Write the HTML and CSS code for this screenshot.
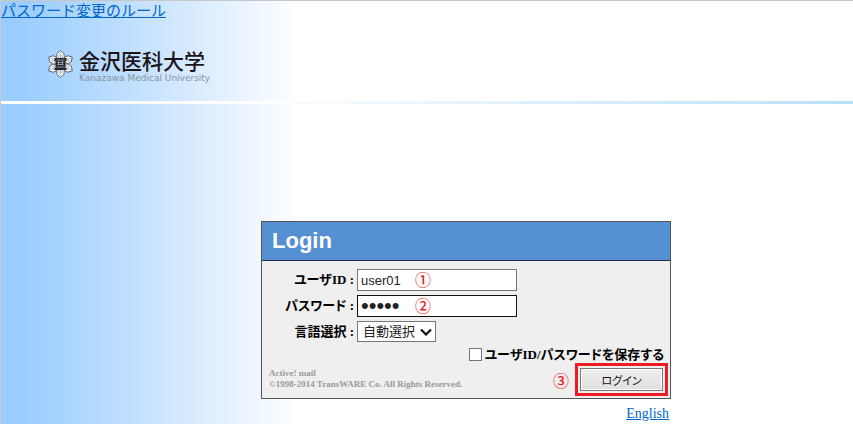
FILE: index.html
```html
<!DOCTYPE html>
<html lang="ja">
<head>
<meta charset="utf-8">
<meta name="viewport" content="width=device-width, initial-scale=1">
<title>Login</title>
<link rel="stylesheet" href="styles.css">
</head>
<body>
<header class="masthead">
  <a class="rules" href="#">パスワード変更のルール</a>
  <div class="brand">
    <svg class="emblem" viewBox="-13 -14 26 28" aria-hidden="true">
      <defs>
        <g id="petal">
          <path d="M0 0-3.800-6.500-3.500-10.500 0-13.600 3.500-10.500 3.800-6.500Z" fill="#fafcfd" stroke="#4a5058" stroke-width=".8" stroke-linejoin="round"/>
          <path d="M0-12V-5M-1.600-9.500V-5M1.600-9.500V-5" stroke="#8a9199" stroke-width=".6"/>
        </g>
      </defs>
      <use href="#petal"/>
      <use href="#petal" transform="rotate(60)"/>
      <use href="#petal" transform="rotate(120)"/>
      <use href="#petal" transform="rotate(180)"/>
      <use href="#petal" transform="rotate(240)"/>
      <use href="#petal" transform="rotate(300)"/>
      <path d="M-6-6H6v3H5v7h1v2H-6V4h1v-7h-1Z" fill="#25282d"/>
      <path d="M-4-4H4M-3-1.500H3M-3 .5H3M-4 3H4M-2-3v4M2-3v4" stroke="#bac2cb" stroke-width=".7"/>
    </svg>
    <div class="names">
      <div class="name-ja">金沢医科大学</div>
      <div class="name-en">Kanazawa Medical University</div>
    </div>
  </div>
</header>
<div class="rule"></div>
<main class="content">
  <form class="panel">
    <h1 class="title">Login</h1>
    <div class="fields">
      <label class="label" for="user">ユーザID :</label>
      <div class="control"><input class="box" id="user" type="text" value="user01"><span class="mark step">①</span></div>
      <label class="label" for="pass">パスワード :</label>
      <div class="control"><input class="box focused" id="pass" type="password" value="12345"><span class="mark step">②</span></div>
      <label class="label" for="lang">言語選択 :</label>
      <div class="control">
        <select class="box select" id="lang"><option>自動選択</option></select>
        <svg class="chevron" viewBox="0 0 12 8" aria-hidden="true"><path d="M1 1.500 6 6.500 11 1.500" fill="none" stroke="#111" stroke-width="2.200"/></svg>
      </div>
    </div>
    <div class="save"><input class="tick" id="save" type="checkbox"><label for="save">ユーザID/パスワードを保存する</label></div>
    <div class="bottom">
      <p class="copyright">Active! mail<br>©1998-2014 TransWARE Co. All Rights Reserved.</p>
      <div class="submit"><span class="mark">③</span><div class="highlight"><button class="login" type="button">ログイン</button></div></div>
    </div>
  </form>
  <a class="english" href="#">English</a>
</main>
</body>
</html>
```
FILE: styles.css
```css
* { box-sizing: border-box; }

html { min-height: 100%; display: flex; flex-direction: column; }

body {
  flex: 1;
  margin: 0;
  border: solid #c8c8c8;
  border-width: 1px 0 0 1px;
  background: linear-gradient(to right, #99ccff 0, #99ccff 16px, #c0dfff 128px, #e2f0ff 220px, #fff 300px);
  color: #000;
  font-family: "Liberation Serif", "Noto Sans CJK JP", serif;
  font-size: 13px;
  font-feature-settings: "palt";
}

a { color: #0066cc; }

.masthead { height: 100px; }

.rules {
  display: block;
  width: max-content;
  font: 15px/17px "Noto Sans CJK JP", sans-serif;
}

.brand { display: flex; gap: 5px; padding: 32px 0 0 46px; }

.emblem { width: 27px; height: 28px; }

.name-ja {
  font: 500 21px/24px "Noto Sans CJK JP", sans-serif;
  font-feature-settings: normal;
  color: #1c1416;
}

.name-en { font: 9px/12px "DejaVu Sans", sans-serif; color: #8592a0; }

.names { margin-top: -2px; }

.rule { height: 3px; background: linear-gradient(to right, #fff 250px, #b9e0fa); }

.content { width: 410px; margin: 117px 0 0 260px; }

.panel { border: 1px solid #555; background: #efefef; }

.title {
  margin: 0;
  padding-left: 10px;
  border-bottom: 1px solid #1c2e48;
  background: #5590d2;
  color: #fff;
  font: bold 22px/38px "Liberation Sans", sans-serif;
}

.fields {
  display: grid;
  grid-template-columns: 92px 1fr;
  grid-template-rows: 22px 22px 21px;
  gap: 4px 3px;
  padding-top: 8px;
}

.label { text-align: right; font-weight: bold; line-height: 21px; white-space: nowrap; }

.control { position: relative; display: flex; height: 100%; }

.box {
  width: 160px;
  height: 100%;
  margin: 0;
  padding: 0 3px;
  border: 1px solid #777;
  border-radius: 0;
  outline: 0;
  background: #fff;
  color: #222;
  font: 13px "Liberation Sans", "Noto Sans CJK JP", sans-serif;
}

.focused { border-color: #111; font-size: 22px; }

.select { width: 79px; padding: 0 5px; appearance: none; }

.chevron { position: absolute; left: 63px; top: 7px; width: 12px; height: 8px; pointer-events: none; }

.mark { color: #ed1c24; font: 500 16px/20px "Noto Sans CJK JP", sans-serif; }

.step { position: absolute; left: 58px; top: 0; }

.save {
  display: flex;
  justify-content: flex-end;
  align-items: center;
  gap: 3px;
  height: 17px;
  margin-top: 4px;
  padding-right: 6px;
  font-weight: bold;
  line-height: 18px;
}

.tick { appearance: none; width: 13px; height: 13px; margin: 0; border: 1px solid #777; background: #fff; }

.bottom { display: flex; justify-content: space-between; padding: 0 2px 2px 7px; }

.copyright { margin: 5px 0 0; color: #999; font: bold 9px/11px "Liberation Serif", serif; }

.submit { display: flex; align-items: center; gap: 6px; }

.highlight { border: 3px solid #ed1c24; padding: 2px; }

.login {
  display: block;
  width: 83px;
  height: 23px;
  padding: 0;
  border: 1px solid #777;
  outline: 1px solid #fff;
  outline-offset: -2px;
  background: linear-gradient(#efefef, #dfdfdf);
  color: #111;
  font: 11px "Noto Sans CJK JP", sans-serif;
  font-feature-settings: "palt";
}

.english { display: block; width: max-content; margin: 7px 2px 0 auto; font-size: 14px; line-height: 16px; }
```
